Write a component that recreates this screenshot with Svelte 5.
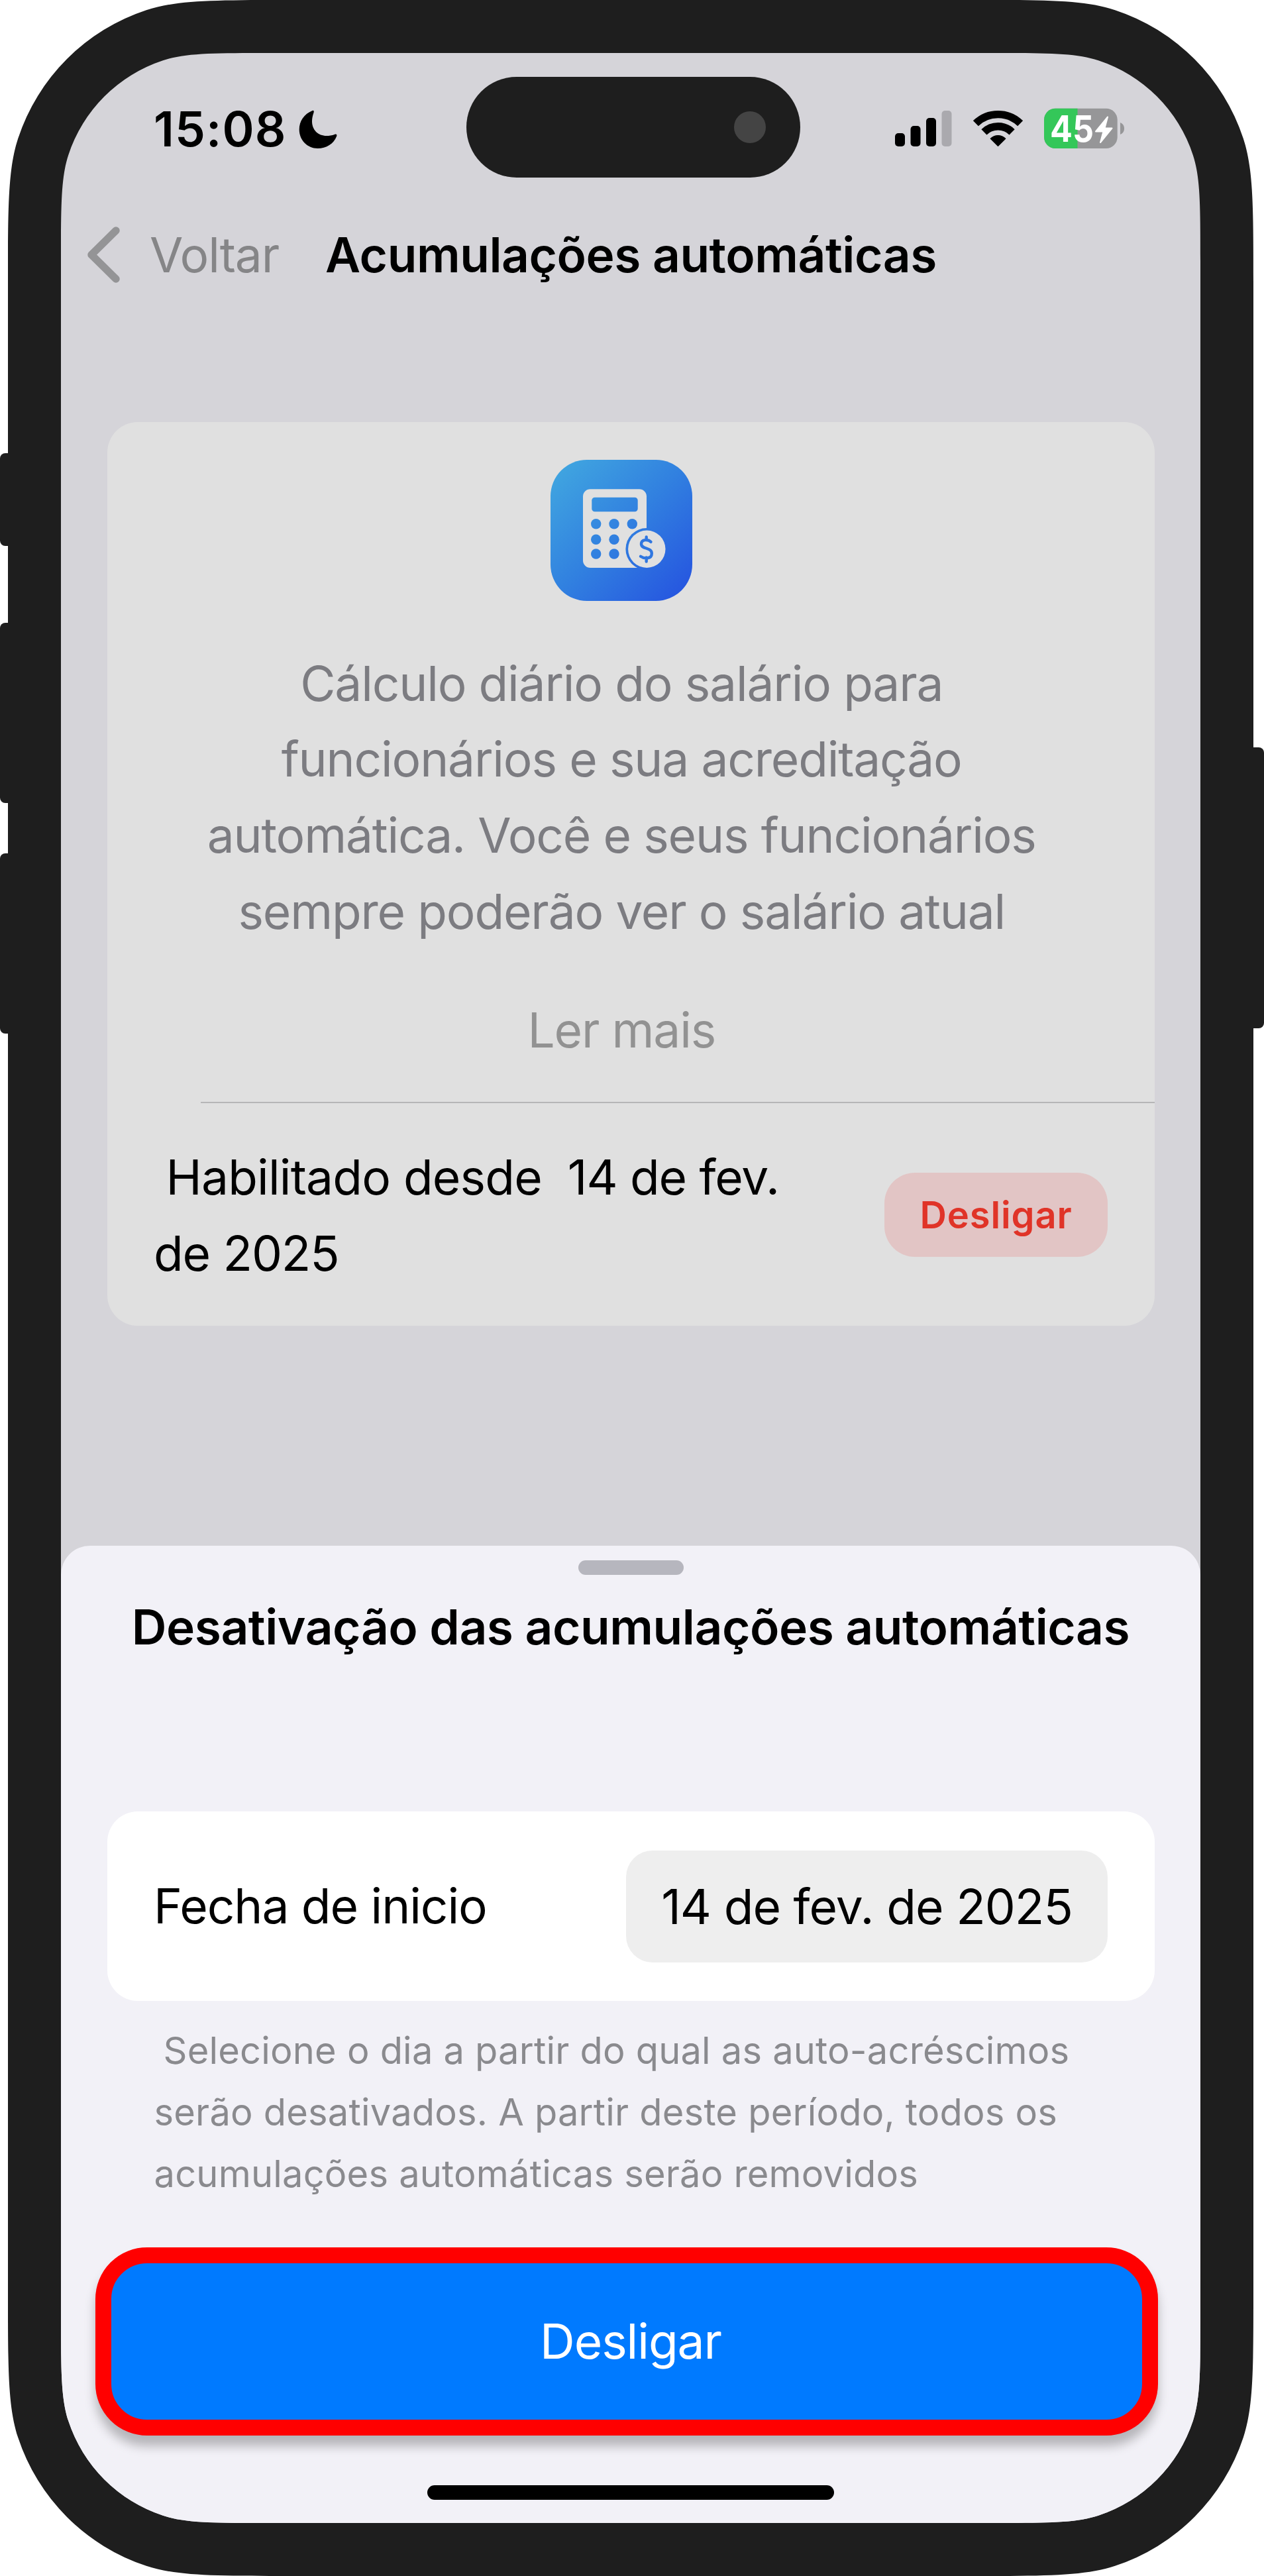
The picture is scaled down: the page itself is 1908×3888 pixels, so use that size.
<!-- TypeScript -->
<script lang="ts">
  const description = [
    'Cálculo diário do salário para',
    'funcionários e sua acreditação',
    'automática. Você e seus funcionários',
    'sempre poderão ver o salário atual'
  ];

  const sideButtons = [
    { side: 'left', top: 684, height: 140 },
    { side: 'left', top: 940, height: 272 },
    { side: 'left', top: 1288, height: 272 },
    { side: 'right', top: 1128, height: 424 }
  ];

  const signalBars = [20, 31, 43, 54];

  const dots = [
    [68.7, 96.7], [96, 96.7], [123.3, 96.7],
    [68.7, 120.2], [96, 120.2],
    [68.7, 142], [96, 142]
  ];

  // rounded rect with smoothed corners
  function squircle(w: number, h: number, r: number, smooth = 0.405) {
    const p = (1 + smooth) * r;
    const angle = (smooth * Math.PI) / 4;
    const arc = Math.sin(Math.PI / 4 - angle) * r * Math.SQRT2;
    const c = r * Math.tan(angle / 2) * Math.cos(angle);
    const d = c * Math.tan(angle);
    const b = (p - arc - c - d) / 3;
    const q = b + c;
    const e = p - 3 * b - c;
    return [
      `M0 ${p}C0 ${d + arc + q} 0 ${d + arc + c} ${d} ${e}A${r} ${r} 0 0 1 ${e} ${d}`,
      `C${e + c} 0 ${e + q} 0 ${p} 0`,
      `L${w - p} 0C${w - e - q} 0 ${w - e - c} 0 ${w - e} ${d}A${r} ${r} 0 0 1 ${w - d} ${e}`,
      `C${w} ${e + c} ${w} ${e + q} ${w} ${p}`,
      `L${w} ${h - p}C${w} ${h - e - q} ${w} ${h - e - c} ${w - d} ${h - e}A${r} ${r} 0 0 1 ${w - e} ${h - d}`,
      `C${w - e - c} ${h} ${w - e - q} ${h} ${w - p} ${h}`,
      `L${p} ${h}C${e + q} ${h} ${e + c} ${h} ${e} ${h - d}A${r} ${r} 0 0 1 ${d} ${h - e}`,
      `C0 ${h - e - c} 0 ${h - e - q} 0 ${h - p}Z`
    ].join('');
  }

  const frameClip = `path("${squircle(1880, 3888, 304)}")`;
  const screenClip = `path("${squircle(1720, 3728, 224)}")`;
</script>

<!-- END TypeScript -->

<div class="device">
  {#each sideButtons as button}
    <span class="side-button {button.side}" style="top: {button.top}px; height: {button.height}px"></span>
  {/each}

  <div class="frame" style="clip-path: {frameClip}">
    <div class="screen" style="clip-path: {screenClip}">
      <div class="page">
        <header class="status-bar">
          <div class="status-left">
            <span class="time">15:08</span>
            <svg width="58" height="64" viewBox="0 0 58 64">
              <path d="M20.5 4C8 9 0.7 20 0.7 32.5C0.7 48.5 13 61 28.5 61C41.5 61 53 54 57.2 42.5C58 40 56.5 39 54 40C50 41.5 46 42 42 42C29 42 20 33 20 20C20 15.5 21 11.5 22.5 7C23.3 4.5 22.5 3.2 20.5 4Z" />
            </svg>
          </div>
          <div class="island"><span class="camera"></span></div>
          <div class="status-right">
            <svg width="86" height="64" viewBox="0 0 86 64">
              {#each signalBars as bar, i}
                <rect x={i * 23.5} y={58 - bar} width="15" height={bar} rx="5" fill={i === 3 ? '#aaa9ae' : '#000'} />
              {/each}
            </svg>
            <svg width="75" height="64" viewBox="0 0 75 64">
              <path d="M3.9 23.2A48.4 48.4 0 0 1 71.1 23.2" fill="none" stroke="#000" stroke-width="11.4" />
              <path d="M16.4 36.3A30.2 30.2 0 0 1 58.6 36.3" fill="none" stroke="#000" stroke-width="11.6" />
              <path d="M37.5 57.2L26.4 46.2A16 16 0 0 1 48.6 46.2Z" stroke="#000" stroke-width="1.4" stroke-linejoin="round" />
            </svg>
            <svg width="121" height="80" viewBox="0 -8 121 80">
              <defs>
                <clipPath id="battery"><rect y="0.7" width="110.7" height="60.3" rx="17" /></clipPath>
              </defs>
              <g clip-path="url(#battery)">
                <rect width="121" height="64" fill="#969698" />
                <rect width="50.5" height="64" fill="#34c759" />
              </g>
              <path d="M115 22C119 23.5 121 27 121 31C121 35 119 38.5 115 40Z" fill="#969698" />
              <text x="9" y="51" textLength="66" lengthAdjust="spacingAndGlyphs" class="charge">45</text>
              <path d="M96 13.5L78 35.5H89.5L85 52L102.5 30.5H91.5Z" fill="#fff" stroke="#fff" stroke-width="2" stroke-linejoin="round" />
            </svg>
          </div>
        </header>

        <nav class="nav-bar">
          <svg width="49" height="86" viewBox="0 0 49 86">
            <path d="M43 6L6 42.5L43 79" fill="none" stroke="#949496" stroke-width="11.5" stroke-linecap="round" stroke-linejoin="round" />
          </svg>
          <span class="back">Voltar</span>
          <h1>Acumulações automáticas</h1>
        </nav>

        <section class="card info-card">
          <div class="info">
            <svg class="app-icon" width="214" height="213" viewBox="0 0 214 213">
              <defs>
                <linearGradient id="icon-bg" gradientUnits="userSpaceOnUse" x1="12" y1="12" x2="202" y2="201">
                  <stop offset="0" stop-color="#40a5e0" />
                  <stop offset="0.5" stop-color="#3180e0" />
                  <stop offset="1" stop-color="#2656e0" />
                </linearGradient>
              </defs>
              <rect width="214" height="213" rx="55" fill="url(#icon-bg)" />
              <rect x="49" y="44.3" width="96" height="118.7" rx="11" fill="#e0e0e0" />
              <g fill="url(#icon-bg)">
                <rect x="62.3" y="56.7" width="69.4" height="21.6" rx="4.5" />
                {#each dots as [cx, cy]}
                  <circle {cx} {cy} r="7.7" />
                {/each}
                <circle cx="145" cy="134.7" r="31.6" />
              </g>
              <circle cx="145.3" cy="134.7" r="28.2" fill="#e0e0e0" />
              <path d="M144.7 116.5V121M144.7 147.5V153.5M151.5 123.8C147 119.8 137 119.6 137 127C137 135.5 152.8 131.5 152.8 141.5C152.8 150 141.5 149.6 136 145.8" fill="none" stroke="#2f76e0" stroke-width="4.4" stroke-linecap="round" />
            </svg>
            <p class="description">
              {#each description as line}
                <span>{line}</span>
              {/each}
            </p>
            <span class="more">Ler mais</span>
          </div>
          <div class="status-row">
            <p><span class="enabled">Habilitado desde</span>&nbsp; 14 de fev.<br />de 2025</p>
            <button class="pill">Desligar</button>
          </div>
        </section>
      </div>

      <section class="sheet">
        <span class="grabber"></span>
        <h2>Desativação das acumulações automáticas</h2>

        <div class="card date-card">
          <span class="label">Fecha de inicio</span>
          <button class="date">14 de fev. de 2025</button>
        </div>

        <p class="hint">
          <span class="first">Selecione o dia a partir do qual as auto-acréscimos</span>
          <span>serão desativados. A partir deste período, todos os</span>
          <span>acumulações automáticas serão removidos</span>
        </p>

        <button class="confirm">Desligar</button>
        <span class="home-indicator"></span>
      </section>
    </div>
  </div>
</div>

<style>
  :global(body) {
    margin: 0;
    background: #fff;
  }

  .device {
    position: relative;
    box-sizing: border-box;
    width: 1908px;
    height: 3888px;
    padding: 0 16px 0 12px;
    overflow: hidden;
    font-family: Inter, 'Liberation Sans', sans-serif;
    font-size: 73px;
    color: #000;
  }

  .side-button {
    position: absolute;
    width: 40px;
    border-radius: 8px;
    background: #1e1e1e;
  }
  .side-button.left { left: 0; }
  .side-button.right { right: 0; }

  .frame {
    position: relative;
    box-sizing: border-box;
    height: 3888px;
    padding: 80px;
    background: #1e1e1e;
  }

  .screen {
    display: flex;
    flex-direction: column;
    height: 3728px;
    background: #d5d4d9;
  }

  h1, h2, p {
    margin: 0;
    font-size: inherit;
  }

  h1, h2 {
    font-weight: 600;
    white-space: nowrap;
    letter-spacing: -0.45px;
  }

  svg {
    display: block;
    flex: none;
  }

  button {
    border: 0;
    padding: 0;
    font: inherit;
    color: inherit;
  }

  .page {
    flex: none;
    box-sizing: border-box;
    height: 2252.7px;
    padding-top: 36px;
  }

  .status-bar {
    display: grid;
    grid-template-columns: 612px 504px 604px;
    height: 152px;
  }
  .status-left, .status-right {
    display: flex;
    align-items: center;
    padding-top: 6px;
  }
  .status-left {
    gap: 18px;
    padding-left: 140px;
  }
  .status-right {
    justify-content: flex-end;
    gap: 32px;
    padding-right: 115px;
  }
  .time {
    font-weight: 600;
    letter-spacing: 1.15px;
    line-height: 88px;
    padding-bottom: 1px;
  }
  .charge {
    font-size: 55px;
    font-weight: 700;
    fill: #fff;
  }
  .island {
    display: flex;
    align-items: center;
    justify-content: flex-end;
    padding-right: 52px;
    border-radius: 76px;
    background: #1e1e1e;
  }
  .camera {
    width: 48px;
    height: 48px;
    border-radius: 50%;
    background: #444;
  }

  .nav-bar {
    display: flex;
    align-items: center;
    height: 100px;
    margin-top: 66.5px;
    padding-left: 40px;
  }
  .back {
    margin: 0 70px 0 45px;
    color: #858587;
    letter-spacing: -1.15px;
  }

  .card {
    margin: 0 69.5px 0 70px;
    border-radius: 46px;
  }

  .info-card {
    box-sizing: border-box;
    height: 1364.5px;
    margin-top: 202px;
    background: #e0e0e0;
  }
  .info {
    display: flex;
    flex-direction: column;
    align-items: center;
    padding: 57px 28px 0 0;
    text-align: center;
    letter-spacing: -1.18px;
  }
  .description {
    margin-top: 68px;
    line-height: 114.75px;
    color: #7c7c81;
  }
  .description span {
    display: block;
    white-space: nowrap;
  }
  .more {
    margin-top: 63px;
    line-height: 115px;
    color: #929292;
  }
  .status-row {
    display: flex;
    align-items: center;
    justify-content: space-between;
    margin-top: 107px;
    padding: 0 70.5px 0 70px;
    position: relative;
  }
  .status-row::before {
    content: '';
    position: absolute;
    top: -56px;
    left: 141px;
    right: 0;
    height: 2px;
    background: #b6b6b7;
  }
  .status-row p {
    line-height: 115px;
    white-space: nowrap;
    letter-spacing: -1.1px;
  }
  .enabled {
    margin-left: 18.5px;
    letter-spacing: -0.8px;
  }
  .pill {
    width: 337px;
    height: 127px;
    border-radius: 46px;
    background: #e2c5c5;
    color: #e03428;
    font-size: 56px;
    font-weight: 600;
    letter-spacing: 0.9px;
  }

  .sheet {
    flex: 1;
    display: flex;
    flex-direction: column;
    align-items: center;
    padding-top: 22.3px;
    border-radius: 44px 44px 0 0;
    background: #f2f1f7;
  }
  .grabber {
    width: 159px;
    height: 22px;
    border-radius: 11px;
    background: #b6b6be;
  }
  h2 {
    margin-top: 29.5px;
    line-height: 100px;
  }
  .date-card {
    display: flex;
    align-items: center;
    justify-content: space-between;
    align-self: stretch;
    box-sizing: border-box;
    height: 285.4px;
    margin-top: 227.8px;
    padding: 0 70.5px 0 70px;
    background: #fff;
    letter-spacing: -1.05px;
  }
  .date {
    width: 727px;
    height: 169px;
    margin-top: 2px;
    border-radius: 40px;
    background: #eee;
    letter-spacing: -0.95px;
  }
  .hint {
    align-self: stretch;
    margin-top: 29.8px;
    padding-left: 140.5px;
    font-size: 56px;
    line-height: 92.7px;
    letter-spacing: 0.2px;
    color: #8a8a8e;
  }
  .hint span {
    display: block;
    white-space: nowrap;
  }
  .hint .first {
    padding-left: 14px;
  }
  .confirm {
    box-sizing: border-box;
    align-self: stretch;
    height: 284px;
    margin: 64.2px 64px 0 52px;
    padding-left: 12px;
    border: 24px solid #f00;
    border-radius: 78px;
    background: #007aff;
    box-shadow: 0 16px 16px rgba(0, 0, 0, 0.25);
    color: #fff;
    letter-spacing: -1.05px;
  }
  .home-indicator {
    width: 614px;
    height: 22px;
    margin-top: 75px;
    border-radius: 11px;
    background: #000;
  }
</style>
